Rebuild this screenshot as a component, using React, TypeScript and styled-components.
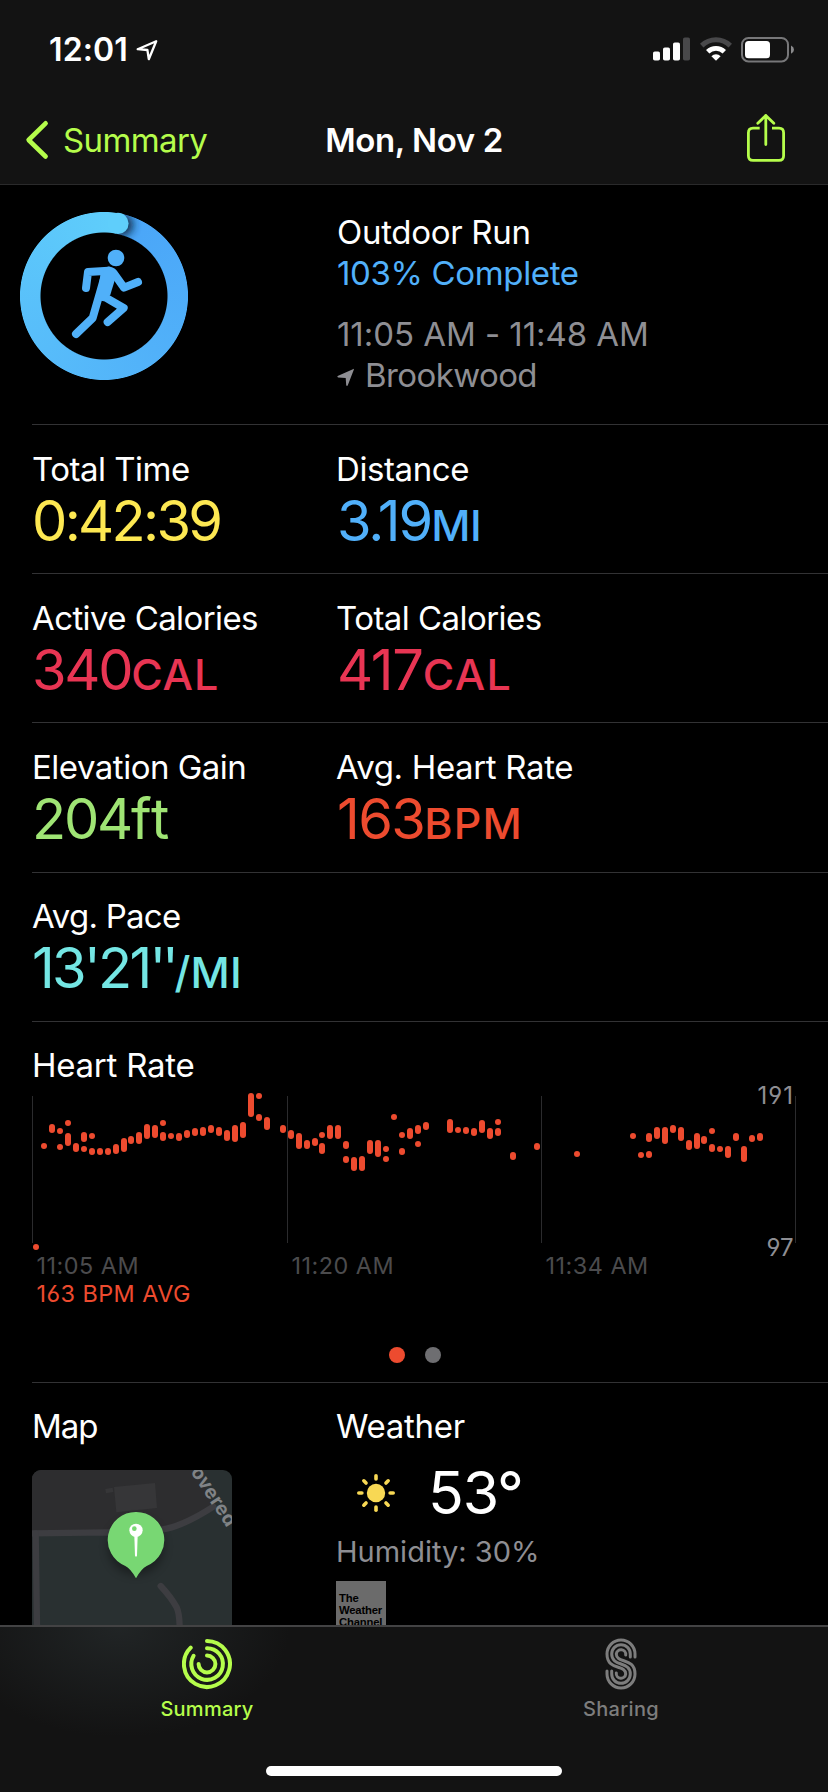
import React from 'react';
import styled, { createGlobalStyle } from 'styled-components';

const GlobalStyle = createGlobalStyle`
  * { box-sizing: border-box; }
  html, body { margin: 0; background: #000; }
  body { font-family: Inter, "Liberation Sans", sans-serif; color: #fff; }
  svg { display: block; }
`;

const LIME = '#b5fd4b';
const ORANGE = '#ed4b2f';

const Screen = styled.div`
  width: 828px;
  height: 1792px;
  display: flex;
  flex-direction: column;
  overflow: hidden;
  background: #000;
`;

const Header = styled.header`
  flex: none;
  height: 185px;
  background: #131313;
  border-bottom: 1px solid #2a2a2b;
`;

const StatusBar = styled.div`
  height: 96px;
  display: flex;
  justify-content: space-between;
  padding: 30px 34px 0 49px;
`;

const StatusGroup = styled.div<{ $gap: number; $top?: number }>`
  display: flex;
  align-items: flex-start;
  gap: ${(p) => p.$gap}px;
  padding-top: ${(p) => p.$top ?? 0}px;
`;

const Clock = styled.span`
  font-size: 32px;
  line-height: 40px;
  font-weight: 600;
  letter-spacing: 0.1px;
`;

const NavBar = styled.nav`
  height: 88px;
  display: grid;
  grid-template-columns: 1fr auto 1fr;
  align-items: start;
  padding: 0 25px;
`;

const BackButton = styled.div`
  display: flex;
  align-items: flex-start;
  gap: 13px;
  padding-top: 24px;
  color: ${LIME};
  font-size: 33px;
  line-height: 40px;
  letter-spacing: -0.6px;
`;

const Title = styled.div`
  padding-top: 24px;
  font-size: 33px;
  line-height: 40px;
  font-weight: 600;
  letter-spacing: -0.4px;
`;

const ShareButton = styled.div`
  justify-self: end;
  padding: 17px 17px 0 0;
`;

const Content = styled.main`
  flex: 1;
  min-height: 0;
  overflow: hidden;
`;

const Overview = styled.section`
  height: 239px;
  display: grid;
  grid-template-columns: 317px 1fr;
  padding: 27px 0 0 20px;
`;

const Ring = styled.div`
  position: relative;
  width: 168px;
  height: 168px;
`;

const RingTrack = styled.div`
  width: 168px;
  height: 168px;
  background: conic-gradient(from 11deg, #4aa5f8, #51b1f9 35%, #57bcfa 60%, #5fcefb);
  mask: radial-gradient(circle at center, transparent 63px, #000 64px, #000 83.6px, transparent 84.4px);
`;

const Runner = styled.svg`
  position: absolute;
  inset: 0;
`;

const Line = styled.div<{ $color: string; $gap?: number; $track?: number }>`
  display: flex;
  align-items: flex-start;
  color: ${(p) => p.$color};
  font-size: 33px;
  line-height: 41px;
  margin-top: ${(p) => p.$gap ?? 0}px;
  letter-spacing: ${(p) => p.$track ?? 0}px;
  white-space: pre;
`;

const Row = styled.section<{ $height: number; $pad?: number }>`
  height: ${(p) => p.$height}px;
  margin-left: 32px;
  border-top: 1px solid #323234;
  padding-top: ${(p) => p.$pad ?? 24}px;
  display: grid;
  grid-template-columns: 304px 1fr;
`;

const Label = styled.div<{ $track?: number }>`
  font-size: 33px;
  line-height: 40px;
  white-space: nowrap;
  letter-spacing: ${(p) => p.$track ?? -0.5}px;
`;

const Value = styled.div<{ $color: string; $track: number; $indent?: number }>`
  margin-top: 2px;
  padding-left: ${(p) => p.$indent ?? 0}px;
  font-size: 56px;
  line-height: 60px;
  font-weight: 400;
  white-space: nowrap;
  color: ${(p) => p.$color};
  letter-spacing: ${(p) => p.$track}px;
`;

const Unit = styled.span<{ $track?: number }>`
  font-size: 43px;
  font-weight: 450;
  letter-spacing: ${(p) => p.$track ?? 0}px;
`;

const Marks = styled.span<{ $track: number }>`
  letter-spacing: ${(p) => p.$track}px;
`;

const ChartSection = styled.section`
  height: 361px;
  margin-left: 32px;
  border-top: 1px solid #323234;
  padding-top: 23px;
`;

const Plot = styled.div`
  position: relative;
  width: 765px;
  margin-top: 5px;
`;

const Bound = styled.span<{ $top: number; $track: number }>`
  position: absolute;
  right: 3px;
  top: ${(p) => p.$top}px;
  font-size: 24px;
  line-height: 28px;
  color: #8e8e93;
  letter-spacing: ${(p) => p.$track}px;
  font-feature-settings: "cv03", "cv04";
`;

const TimeAxis = styled.div`
  display: grid;
  grid-template-columns: 255px 254px 255px;
  margin-top: 1px;
  font-size: 23.4px;
  line-height: 28px;
  color: #4b4b4d;
  letter-spacing: 0.5px;
  padding-left: 4.5px;
`;

const Average = styled.div`
  font-size: 23.4px;
  line-height: 28px;
  padding-left: 4.5px;
  color: ${ORANGE};
  letter-spacing: 0.45px;
  font-feature-settings: "cv03", "cv04";
`;

const Pager = styled.div`
  display: flex;
  justify-content: center;
  gap: 20px;
  margin: 39px 0 0 -31px;
`;

const PageDot = styled.span<{ $active?: boolean }>`
  width: 16px;
  height: 16px;
  border-radius: 50%;
  background: ${(p) => (p.$active ? ORANGE : '#6e6e71')};
`;

const MapTile = styled.svg`
  margin-top: 24px;
  border-radius: 9px;
`;

const Temperature = styled.div`
  display: flex;
  align-items: center;
  gap: 33px;
  height: 70px;
  margin-top: 12px;
  padding-left: 21px;
  font-size: 59px;
  line-height: 70px;
  letter-spacing: -1.2px;
`;

const Humidity = styled.div`
  font-size: 29px;
  line-height: 36px;
  margin-top: 6px;
  color: #8e8e93;
`;

const Provider = styled.div`
  width: 50px;
  height: 50px;
  margin-top: 11px;
  padding: 11px 0 0 3px;
  background: #6b6b6b;
  color: #000;
  font-family: "Liberation Sans", sans-serif;
  font-weight: 700;
  font-size: 11.3px;
  line-height: 12px;
  letter-spacing: -0.2px;
`;

const TabBar = styled.footer`
  flex: none;
  height: 167px;
  border-top: 2px solid #434344;
  background:
    radial-gradient(ellipse 170px 110px at 120px 0, rgba(50, 58, 60, 0.45), transparent),
    #131313;
  display: flex;
  flex-direction: column;
  align-items: center;
`;

const Tabs = styled.div`
  width: 100%;
  height: 139px;
  display: grid;
  grid-template-columns: 1fr 1fr;
`;

const Tab = styled.div<{ $color: string; $track: number }>`
  display: flex;
  flex-direction: column;
  align-items: center;
  gap: 7px;
  padding-top: 11px;
  color: ${(p) => p.$color};
  font-size: 20px;
  line-height: 24px;
  font-weight: 500;
  letter-spacing: ${(p) => p.$track}px;
`;

const HomeIndicator = styled.div`
  width: 296px;
  height: 10px;
  border-radius: 5px;
  background: #fff;
`;

/* Heart rate samples: [x, top, bottom], three units to a pixel. */
const SAMPLES: [number, number, number][] = [
  [108, 492, 510], [132, 189, 207], [156, 132, 159], [180, 144, 162], [180, 192, 210],
  [204, 120, 138], [204, 159, 198], [228, 189, 216], [252, 156, 186], [252, 198, 216],
  [276, 159, 177], [276, 204, 225], [300, 204, 225], [324, 204, 225], [348, 192, 222],
  [372, 174, 216], [393, 168, 192], [417, 156, 192], [441, 132, 177], [465, 135, 174],
  [489, 120, 138], [489, 156, 183], [513, 159, 177], [537, 159, 183], [561, 150, 174],
  [585, 144, 168], [609, 141, 168], [633, 135, 159], [657, 141, 168], [681, 150, 183],
  [705, 135, 186], [729, 126, 174], [753, 39, 111], [777, 39, 57], [777, 102, 123],
  [801, 111, 150], [849, 135, 159], [873, 150, 177], [897, 159, 207], [921, 180, 207],
  [945, 174, 198], [966, 156, 174], [966, 189, 222], [990, 135, 177], [1014, 135, 177],
  [1038, 183, 207], [1038, 228, 249], [1062, 231, 273], [1086, 228, 273], [1110, 180, 222],
  [1134, 180, 231], [1158, 198, 216], [1158, 228, 246], [1182, 102, 120], [1206, 156, 174],
  [1206, 204, 225], [1230, 144, 177], [1254, 135, 162], [1254, 183, 201], [1278, 126, 150],
  [1350, 117, 159], [1374, 141, 159], [1398, 141, 162], [1422, 144, 168], [1446, 120, 159],
  [1470, 144, 177], [1494, 117, 135], [1494, 144, 168], [1539, 216, 240], [1611, 189, 210],
  [1731, 213, 231], [1899, 159, 177], [1923, 216, 234], [1947, 159, 186], [1947, 213, 234],
  [1971, 141, 177], [1995, 141, 192], [2019, 135, 159], [2043, 141, 183], [2067, 180, 210],
  [2091, 159, 207], [2112, 168, 192], [2136, 144, 162], [2136, 192, 216], [2160, 198, 216],
  [2184, 198, 234], [2208, 159, 183], [2232, 198, 246], [2256, 165, 186], [2280, 159, 183],
];

const GRID = [96, 861, 1623, 2385];

const HeartChart = () => (
  <svg width="765" height="161" viewBox="96 30 2295 483">
    {GRID.map((x) => (
      <rect key={x} x={x} y="48" width="3" height="441" fill="#2b2b2d" />
    ))}
    {SAMPLES.map(([x, top, bottom], i) => (
      <rect key={i} x={x - 9} y={top} width="18" height={bottom - top} rx="9" fill={ORANGE} />
    ))}
  </svg>
);

const LocationOutline = () => (
  <svg width="24" height="24" viewBox="0 0 24 24" fill="none" stroke="#fff" strokeWidth="2.3" strokeLinejoin="round">
    <path d="M21.2 3.2 2.7 11.2 12.4 12 13.8 21.2Z" />
  </svg>
);

const Signal = () => (
  <svg width="37" height="24" viewBox="0 0 37 24">
    <rect x="0" y="14.5" width="7" height="9" rx="1.8" fill="#fff" />
    <rect x="10" y="10.5" width="7" height="13" rx="1.8" fill="#fff" />
    <rect x="20" y="5.5" width="7" height="18" rx="1.8" fill="#fff" />
    <rect x="30" y="0.5" width="7" height="23" rx="1.8" fill="#48484a" />
  </svg>
);

const Wifi = () => (
  <svg width="32" height="24" viewBox="0.5 0 32 24" fill="none">
    <path d="M2.2 8.6A20.4 20.4 0 0 1 30.8 8.6" stroke="#48484a" strokeWidth="5" />
    <path d="M8.2 14.7A11.8 11.8 0 0 1 24.8 14.7" stroke="#fff" strokeWidth="4.8" />
    <path d="M16.5 23.8 11.9 19.2A6.4 6.4 0 0 1 21.1 19.2Z" fill="#fff" />
  </svg>
);

const Battery = () => (
  <svg width="53" height="26" viewBox="0 0 53 26">
    <rect x="1" y="1" width="46" height="23.4" rx="6.5" fill="none" stroke="#777779" strokeWidth="2" />
    <rect x="4" y="4" width="25" height="17.3" rx="3.5" fill="#fff" />
    <path d="M50 8.6Q53 10.2 53 12.7T50 16.8Z" fill="#8a8a8c" />
  </svg>
);

const Chevron = () => (
  <svg width="25" height="40" viewBox="0 0 25 40" fill="none" stroke={LIME} strokeWidth="4.6" strokeLinecap="round" strokeLinejoin="round">
    <path d="M20.6 3.3 3.6 20 20.6 36.5" />
  </svg>
);

const Share = () => (
  <svg width="40" height="50" viewBox="0 0 40 50" fill="none" stroke={LIME} strokeWidth="2.8" strokeLinecap="butt" strokeLinejoin="round">
    <path d="M13.7 15.2H7Q2.4 15.2 2.4 19.8V42.8Q2.4 47.4 7 47.4H33Q37.6 47.4 37.6 42.8V19.8Q37.6 15.2 33 15.2H26" />
    <path d="M19.8 31.5V2.4M11.8 10.3 19.8 2.4 27.8 10.3" strokeLinecap="round" />
  </svg>
);

const RingCap = () => (
  <Runner width="168" height="168" viewBox="0 0 168 168">
    <defs>
      <clipPath id="ahead">
        <path d="M96 0 H168 V60 L101 30 L96 22Z" />
      </clipPath>
      <clipPath id="track">
        <path d="M84 0A84 84 0 0 1 168 84H147A63 63 0 0 0 84 21Z" />
      </clipPath>
      <filter id="soft" x="-100%" y="-100%" width="300%" height="300%">
        <feGaussianBlur stdDeviation="4" />
      </filter>
    </defs>
    <g clipPath="url(#track)">
      <g clipPath="url(#ahead)">
        <circle cx="102" cy="13" r="11" fill="#0b2740" opacity="0.95" filter="url(#soft)" />
      </g>
    </g>
    <circle cx="98" cy="11.4" r="10.6" fill="#5fcefb" />
  </Runner>
);

const RunnerFigure = () => (
  <Runner width="168" height="168" viewBox="60 66 504 504" fill="none" stroke="#50b0f9" strokeWidth="24" strokeLinecap="round" strokeLinejoin="round">
    <circle cx="348" cy="204" r="25" fill="#50b0f9" stroke="none" />
    <path d="M258 294 264 246 326 242" />
    <path d="M328 242Q338 244 343 252L372 293 414 276" />
    <path d="M316 252 278 384 228 432" />
    <path d="M316 322 371 354 323 396" />
    <path d="M302 250 330 238 347 262 331 314 312 334 290 330Z" fill="#50b0f9" stroke="none" />
  </Runner>
);

const LocationArrow = () => (
  <svg width="28" height="41" viewBox="0 0 28 41">
    <path d="M16.5 14Q17.2 13.3 16.8 14.8L10.8 30.2Q10 31.8 9.2 30.2L8.7 23 1.2 22.4Q-.6 21.6 1.2 20.8Z" fill="#8e8e93" />
  </svg>
);

const MapPreview = () => (
  <MapTile width="200" height="200" viewBox="96 270 600 600">
    <defs>
      <filter id="pinShadow" x="-50%" y="-50%" width="200%" height="200%">
        <feGaussianBlur stdDeviation="14" />
      </filter>
    </defs>
    <rect x="96" y="270" width="600" height="600" fill="#293031" />
    <path d="M96 270H592L640 375Q560 440 480 450L96 460Z" fill="#2d2d2f" />
    <g fill="none" stroke="#3d3d41" strokeWidth="19" strokeLinecap="round">
      <path d="M90 460 320 457Q440 460 500 446T640 380" />
      <path d="M107 460 113 880" />
      <path d="M482 618Q512 650 530 682 540 704 539 760V880" />
    </g>
    <path d="M342 321 465 309 471 384 349 397Z" fill="#363638" />
    <path d="M316 327 338 323 340 336 318 340Z" fill="#363638" />
    <text x="0" y="0" transform="translate(571 275) rotate(57)" fill="#808386" fontFamily="Inter, sans-serif" fontWeight="700" fontSize="58" letterSpacing="1">
      overed
    </text>
    <circle cx="408" cy="500" r="84" fill="#000" opacity="0.35" filter="url(#pinShadow)" />
    <path d="M408 396A84 84 0 0 1 440 558Q424 566 408 595 392 566 376 558A84 84 0 0 1 408 396Z" fill="#78d773" />
    <circle cx="408" cy="451" r="20" fill="#fff" />
    <circle cx="403" cy="446" r="7" fill="#78d773" />
    <path d="M403 468H413L411 527Q408 533 405 527Z" fill="#fff" />
  </MapTile>
);

const Sun = () => (
  <svg width="38" height="38" viewBox="-19 -19 38 38" stroke="#f8d854" strokeWidth="3.6" strokeLinecap="round">
    <circle r="9.2" fill="#f8d854" stroke="none" />
    {[0, 45, 90, 135, 180, 225, 270, 315].map((a) => (
      <path key={a} d="M0-17.2V-14.1" transform={`rotate(${a})`} />
    ))}
  </svg>
);

const Rings = () => (
  <svg width="50" height="52" viewBox="-25 -26 50 52" fill="none" stroke="currentColor" strokeWidth="4" strokeLinecap="round">
    <path d="M0-23A23 23 0 1 1-16.3-16.3" />
    <path d="M0-15.8A15.8 15.8 0 1 1-13.4-8.2" />
    <path d="M0-8.4A8.4 8.4 0 1 1-8.4 0" />
  </svg>
);

const SharingGlyph = () => (
  <svg width="34" height="52" viewBox="-17 -26 34 52" fill="none" stroke="currentColor" strokeWidth="3" strokeLinecap="round">
    <path d="M14-7V-10A14 14 0 0 0-14-10C-14 7 4.7 0 4.7 10A4.7 4.7 0 0 1-4.7 9" />
    <path d="M9.3-7V-10A9.3 9.3 0 0 0-9.3-10C-9.3 3 9.3-3 9.3 10A9.3 9.3 0 0 1-9.3 10V7" />
    <path d="M4.7-9A4.7 4.7 0 0 0-4.7-10C-4.7 0 14-7 14 10A14 14 0 0 1-14 10V7" />
  </svg>
);

export default function App() {
  return (
    <>
      <GlobalStyle />
      <Screen>
        <Header>
          <StatusBar>
            <StatusGroup $gap={7}>
              <Clock>12:01</Clock>
              <StatusGroup $gap={0} $top={8}>
                <LocationOutline />
              </StatusGroup>
            </StatusGroup>
            <StatusGroup $gap={9.5} $top={7}>
              <Signal />
              <Wifi />
              <Battery />
            </StatusGroup>
          </StatusBar>
          <NavBar>
            <BackButton>
              <Chevron />
              <span>Summary</span>
            </BackButton>
            <Title>Mon, Nov 2</Title>
            <ShareButton>
              <Share />
            </ShareButton>
          </NavBar>
        </Header>

        <Content>
          <Overview>
            <Ring>
              <RingTrack />
              <RingCap />
              <RunnerFigure />
            </Ring>
            <div>
              <Line $color="#fff" $track={-0.3}>Outdoor Run</Line>
              <Line $color="#51b0fa" $track={-0.35}>103% Complete</Line>
              <Line $color="#8e8e93" $gap={20} $track={-0.05}>11:05 AM - 11:48 AM</Line>
              <Line $color="#8e8e93" $track={-0.6}>
                <LocationArrow />
                Brookwood
              </Line>
            </div>
          </Overview>

          <Row $height={149}>
            <div>
              <Label>Total Time</Label>
              <Value $color="#fde852" $track={-2.7}>0:42:39</Value>
            </div>
            <div>
              <Label $track={-0.4}>Distance</Label>
              <Value $color="#51b0fa" $track={-2} $indent={1}>3.19<Unit $track={-0.5}>MI</Unit></Value>
            </div>
          </Row>
          <Row $height={149}>
            <div>
              <Label $track={-0.6}>Active Calories</Label>
              <Value $color="#e83553" $track={-2.3}>340<Unit $track={0.8}>CAL</Unit></Value>
            </div>
            <div>
              <Label $track={-0.55}>Total Calories</Label>
              <Value $color="#e83553" $track={-1.3} $indent={1}>417<Unit $track={1.4}>CAL</Unit></Value>
            </div>
          </Row>
          <Row $height={150}>
            <div>
              <Label>Elevation Gain</Label>
              <Value $color="#9fe474" $track={-2.2}>204<Marks $track={1.2}>ft</Marks></Value>
            </div>
            <div>
              <Label $track={-0.35}>Avg. Heart Rate</Label>
              <Value $color={ORANGE} $track={-1.6} $indent={1}>163<Unit $track={1.2}>BPM</Unit></Value>
            </div>
          </Row>
          <Row $height={149} $pad={23}>
            <div>
              <Label $track={-0.75}>Avg. Pace</Label>
              <Value $color="#74e6e4" $track={-2.7}>
                13'21<Marks $track={-4.4}>''</Marks><Unit $track={0.2}>/MI</Unit>
              </Value>
            </div>
          </Row>

          <ChartSection>
            <Label $track={-0.25}>Heart Rate</Label>
            <Plot>
              <HeartChart />
              <Bound $top={-8} $track={1}>191</Bound>
              <Bound $top={144} $track={0.5}>97</Bound>
            </Plot>
            <TimeAxis>
              <span>11:05 AM</span>
              <span>11:20 AM</span>
              <span>11:34 AM</span>
            </TimeAxis>
            <Average>163 BPM AVG</Average>
            <Pager>
              <PageDot $active />
              <PageDot />
            </Pager>
          </ChartSection>

          <Row $height={300} $pad={23}>
            <div>
              <Label $track={-1.1}>Map</Label>
              <MapPreview />
            </div>
            <div>
              <Label $track={-0.3}>Weather</Label>
              <Temperature>
                <Sun />
                <span>53°</span>
              </Temperature>
              <Humidity>Humidity: 30%</Humidity>
              <Provider>
                The
                <br />
                Weather
                <br />
                Channel
              </Provider>
            </div>
          </Row>
        </Content>

        <TabBar>
          <Tabs>
            <Tab $color={LIME} $track={0.25}>
              <Rings />
              <span>Summary</span>
            </Tab>
            <Tab $color="#7d7d7d" $track={0.3}>
              <SharingGlyph />
              <span>Sharing</span>
            </Tab>
          </Tabs>
          <HomeIndicator />
        </TabBar>
      </Screen>
    </>
  );
}
